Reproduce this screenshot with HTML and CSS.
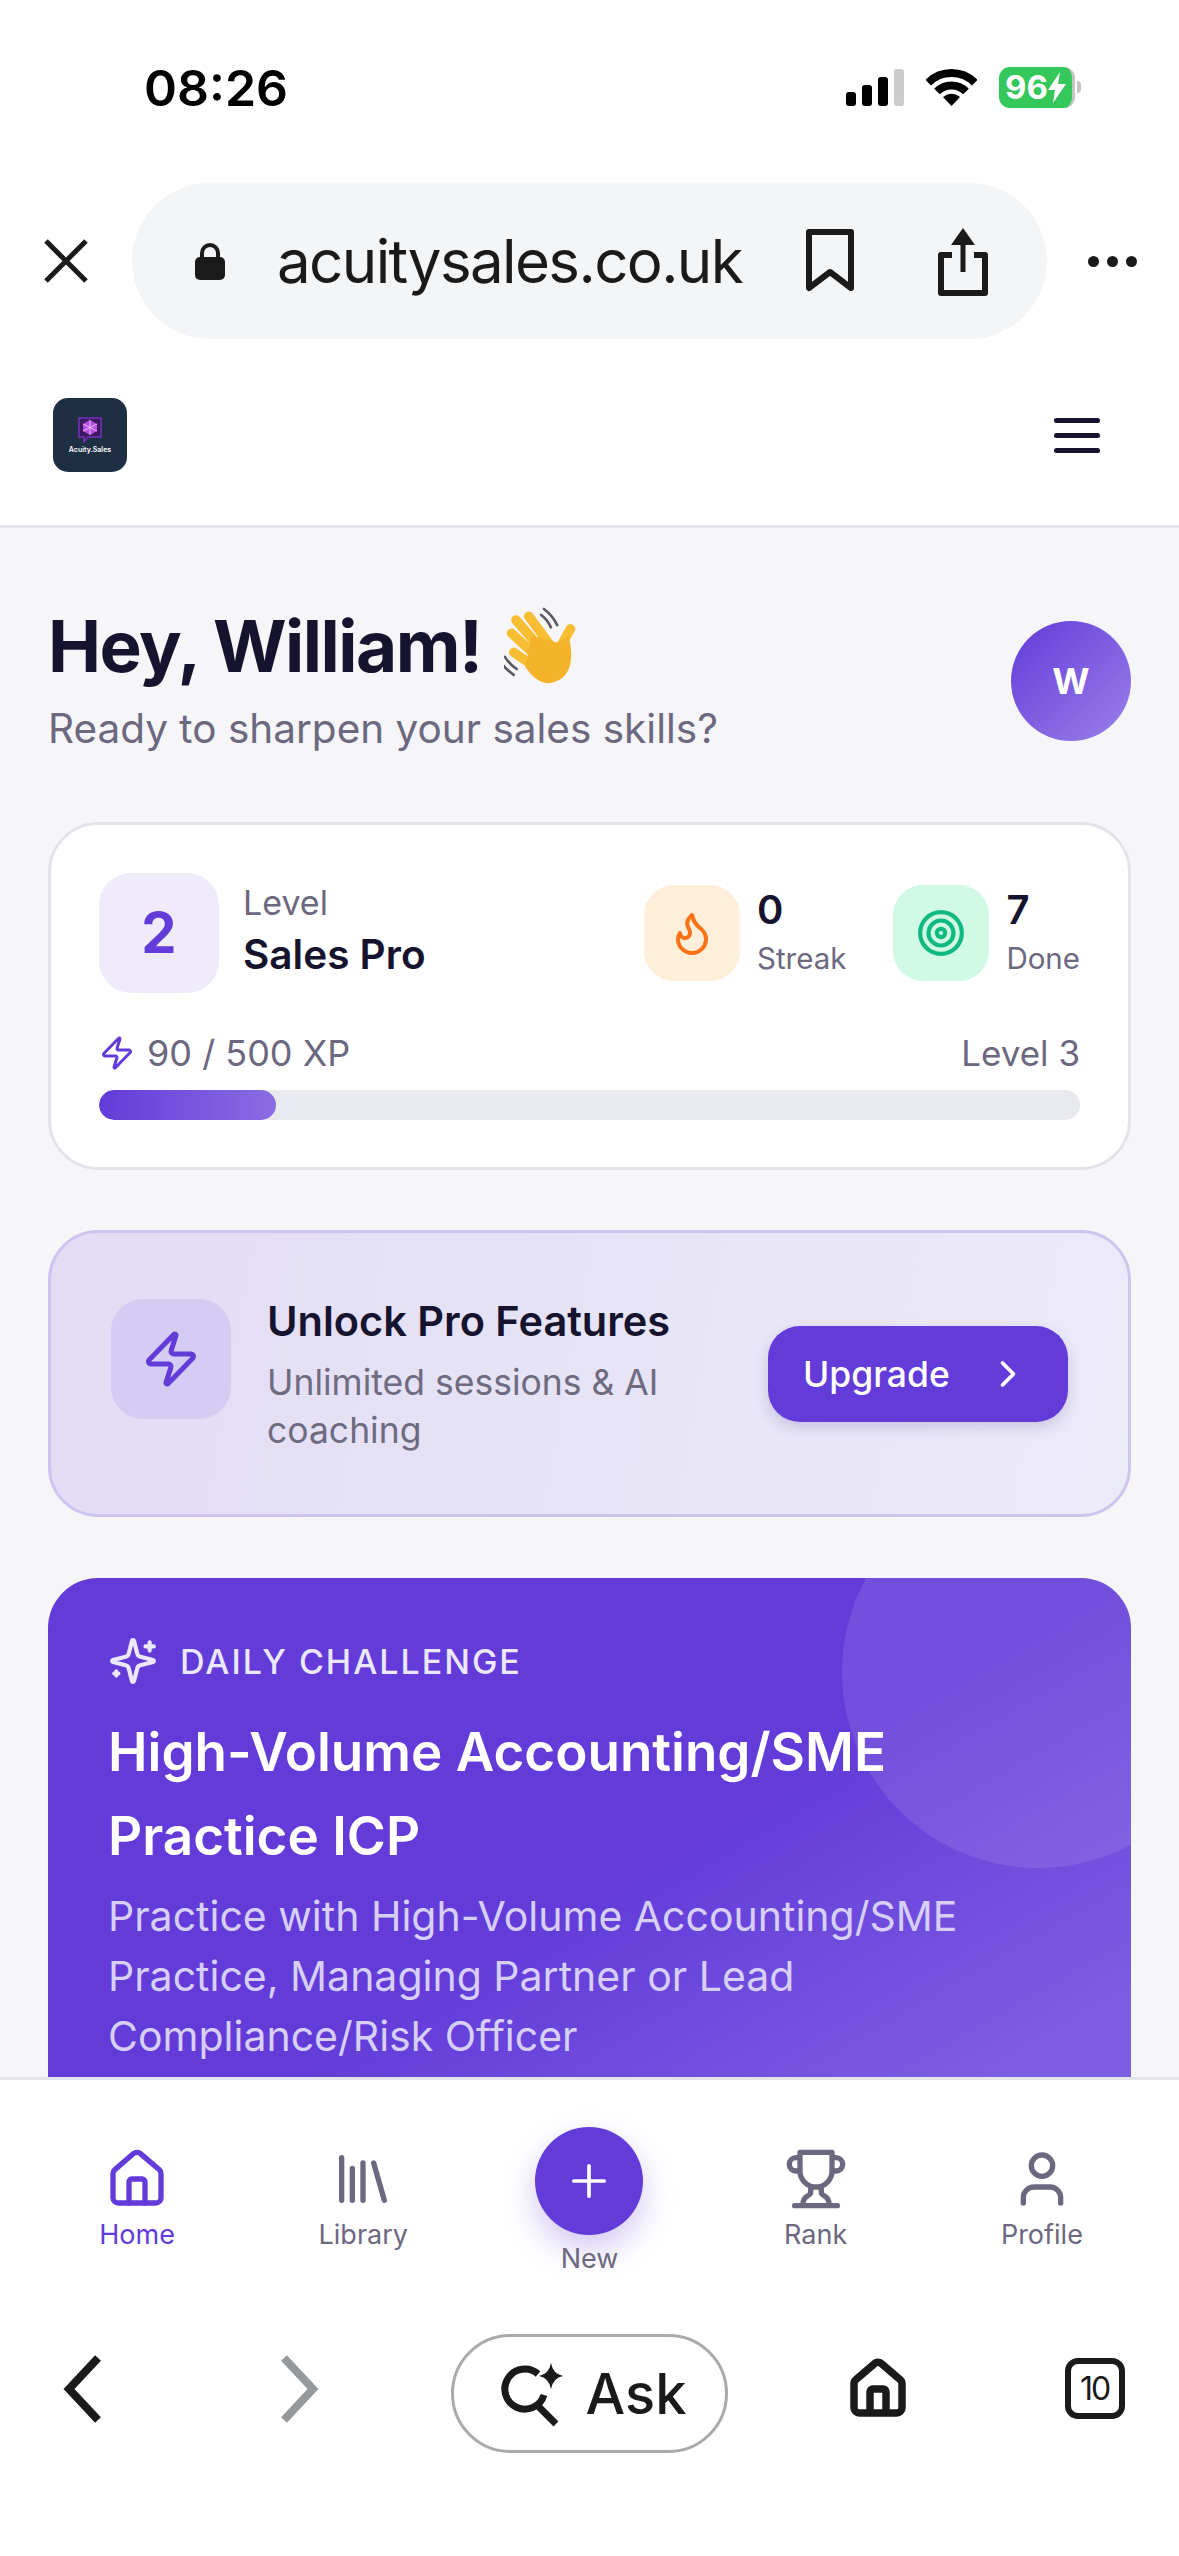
FILE: index.html
```html
<!DOCTYPE html>
<html lang="en">
<head>
    <meta charset="UTF-8">
    <title>Acuity Sales</title>
    <link rel="stylesheet" href="styles.css">
</head>
<body>
    <svg class="sprite" width="0" height="0">
        <symbol id="i-zap" viewBox="0 0 24 24"><path d="M4 14a1 1 0 0 1-.78-1.63l9.9-10.2a.5.5 0 0 1 .86.46l-1.92 6.02A1 1 0 0 0 13 10h7a1 1 0 0 1 .78 1.63l-9.9 10.2a.5.5 0 0 1-.86-.46l1.92-6.02A1 1 0 0 0 11 14z"/></symbol>
        <symbol id="i-home" viewBox="0 0 24 24"><path d="M15 21v-8a1 1 0 0 0-1-1h-4a1 1 0 0 0-1 1v8"/><path d="M3 10a2 2 0 0 1 .709-1.528l7-5.999a2 2 0 0 1 2.582 0l7 5.999A2 2 0 0 1 21 10v9a2 2 0 0 1-2 2H5a2 2 0 0 1-2-2z"/></symbol>
    </svg>

    <div class="status">
        <span class="time">08:26</span>
        <div class="status-icons">
            <svg class="signal" width="58" height="37" viewBox="0 0 58 37"><rect y="23" width="10" height="14" rx="3"/><rect x="16" y="16" width="10" height="21" rx="3"/><rect x="32" y="8" width="10" height="29" rx="3"/><rect x="48" width="10" height="37" rx="3" fill="#ccc"/></svg>
            <svg class="wifi" width="51" height="37" viewBox="0 0 51 37"><path d="M2.2 13.7a33 33 0 0 1 46.6 0M11 22.5a20.5 20.5 0 0 1 29 0" fill="none" stroke="#000" stroke-width="8"/><path d="M25.5 37 17 28q8.500-6.500 17 0z"/></svg>
            <div class="battery">
                <div class="battery-body">
                    <span>96</span>
                    <svg width="18" height="31" viewBox="0 0 18 31"><path d="M12 0 0 18h7l-2 13 13-19h-8z" fill="#fff"/></svg>
                </div>
                <span class="battery-nub"></span>
            </div>
        </div>
    </div>

    <div class="urlbar">
        <svg class="close-icon" width="46" height="46" viewBox="0 0 46 46"><path d="M3 3l40 40M43 3 3 43" stroke="#1a1a1a" stroke-width="5"/></svg>
        <div class="pill">
            <svg class="lock" width="30" height="37" viewBox="0 0 30 37"><path d="M7 16V10a8 8 0 0 1 16 0v6" fill="none" stroke="#1a1a1a" stroke-width="4"/><rect y="14" width="30" height="23" rx="5" fill="#1a1a1a"/></svg>
            <span class="url">acuitysales.co.uk</span>
            <svg class="bookmark" width="48" height="64" viewBox="0 0 48 64"><path d="M3 3h42v56L24 43 3 59z" fill="none" stroke="#1a1a1a" stroke-width="6" stroke-linejoin="round"/></svg>
            <svg class="share" width="52" height="70" viewBox="0 0 52 70"><path d="M15 29H4v38h44V29H37" fill="none" stroke="#1a1a1a" stroke-width="6" stroke-linejoin="round"/><path d="M26 46V10" stroke="#1a1a1a" stroke-width="5"/><path d="M14 19 26 2l12 17z" fill="#1a1a1a"/></svg>
        </div>
        <div class="dots"><span></span><span></span><span></span></div>
    </div>

    <header class="app-header">
        <div class="logo">
            <svg width="24" height="26" viewBox="0 0 24 26"><path d="M1 1h22v19H10l-4 5v-5H1z" fill="#3b1a5e" stroke="#7b2cbf" stroke-width="1.500"/><path d="M12 3l7 4v7l-7 4-7-4V7z" fill="#b84ee8"/><path d="M12 3v15M5 7l14 7M19 7 5 14" stroke="#f0d4ff" stroke-width=".8"/></svg>
            <span>Acuity.Sales</span>
        </div>
        <div class="burger"><span></span><span></span><span></span></div>
    </header>

    <main class="content">
        <section class="hero">
            <div class="hero-text">
                <h1>Hey, William!
                    <svg class="wave" width="74" height="81" viewBox="90 60 200 220">
                        <path d="M198 68q24 18 36 44M190 84q18 14 27 34M76 205q14 24 40 42M92 198q12 20 32 33" fill="none" stroke="#5b5b5f" stroke-width="7" stroke-linecap="round"/>
                        <g fill="none" stroke="#f7bd33" stroke-width="26" stroke-linecap="round">
                            <path d="M157 88l55 75M122 98l65 75M110 134l60 55M116 186l50 34M270 122l-28 50"/>
                        </g>
                        <path d="M165 140l70 20 30-20q12 50 4 80-12 45-62 50-35-5-60-45z" fill="#f5b32c"/>
                    </svg>
                </h1>
                <p>Ready to sharpen your sales skills?</p>
            </div>
            <div class="avatar">W</div>
        </section>

        <section class="card stats">
            <div class="stats-top">
                <div class="level-tile">2</div>
                <div class="level-text">
                    <span class="muted">Level</span>
                    <strong>Sales Pro</strong>
                </div>
                <div class="stat stat-first">
                    <div class="stat-tile tile-orange">
                        <svg width="48" height="48" viewBox="0 0 24 24" class="line flame"><path d="M8.500 14.500A2.500 2.500 0 0 0 11 12c0-1.380-.5-2-1-3-1.072-2.143-.224-4.054 2-6 .5 2.500 2 4.900 4 6.500 2 1.600 3 3.500 3 5.500a7 7 0 1 1-14 0c0-1.153.433-2.294 1-3a2.500 2.500 0 0 0 2.500 2.500z"/></svg>
                    </div>
                    <div class="stat-text"><strong>0</strong><span class="muted">Streak</span></div>
                </div>
                <div class="stat">
                    <div class="stat-tile tile-green">
                        <svg width="50" height="50" viewBox="0 0 24 24" class="line target"><circle cx="12" cy="12" r="10"/><circle cx="12" cy="12" r="6"/><circle cx="12" cy="12" r="2"/></svg>
                    </div>
                    <div class="stat-text"><strong>7</strong><span class="muted">Done</span></div>
                </div>
            </div>
            <div class="xp-row">
                <span class="xp-now">
                    <svg width="36" height="36" class="line purple"><use href="#i-zap"/></svg>
                    90 / 500 XP
                </span>
                <span>Level 3</span>
            </div>
            <div class="progress"><div class="progress-fill" style="width: 18%"></div></div>
        </section>

        <section class="card promo">
            <div class="promo-tile">
                <svg width="60" height="60" class="line purple"><use href="#i-zap"/></svg>
            </div>
            <div class="promo-text">
                <h2>Unlock Pro Features</h2>
                <p>Unlimited sessions &amp; AI coaching</p>
            </div>
            <button class="upgrade">
                Upgrade
                <svg width="44" height="44" viewBox="0 0 24 24" class="line"><path d="m9 18 6-6-6-6"/></svg>
            </button>
        </section>

        <section class="challenge">
            <div class="challenge-label">
                <svg width="50" height="50" viewBox="0 0 24 24" class="line"><path d="M9.937 15.500A2 2 0 0 0 8.500 14.063l-6.135-1.582a.5.5 0 0 1 0-.962L8.500 9.936A2 2 0 0 0 9.937 8.500l1.582-6.135a.5.5 0 0 1 .963 0L14.063 8.500A2 2 0 0 0 15.500 9.937l6.135 1.581a.5.5 0 0 1 0 .964L15.500 14.063a2 2 0 0 0-1.437 1.437l-1.582 6.135a.5.5 0 0 1-.963 0z"/><path d="M20 3v4M22 5h-4M4 17v2M5 18H3"/></svg>
                DAILY CHALLENGE
            </div>
            <h2>High-Volume Accounting/SME Practice ICP</h2>
            <p>Practice with High-Volume Accounting/SME Practice, Managing Partner or Lead Compliance/Risk Officer</p>
        </section>
    </main>

    <nav class="tabbar">
        <div class="tab tab-active">
            <svg width="64" height="64" class="line"><use href="#i-home"/></svg>
            <span>Home</span>
        </div>
        <div class="tab">
            <svg width="64" height="64" viewBox="0 0 24 24" class="line"><path d="m16 6 4 14M12 6v14M8 8v12M4 4v16"/></svg>
            <span>Library</span>
        </div>
        <div class="tab tab-new">
            <div class="new-btn">
                <svg width="52" height="52" viewBox="0 0 24 24" class="line plus"><path d="M5 12h14M12 5v14"/></svg>
            </div>
            <span>New</span>
        </div>
        <div class="tab">
            <svg width="64" height="64" viewBox="0 0 24 24" class="line"><path d="M6 9H4.500a2.500 2.500 0 0 1 0-5H6M18 9h1.500a2.500 2.500 0 0 0 0-5H18M4 22h16M10 14.660V17c0 .55-.47.98-.97 1.210C7.850 18.750 7 20.240 7 22M14 14.660V17c0 .55.47.98.97 1.210C16.150 18.750 17 20.240 17 22M18 2H6v7a6 6 0 0 0 12 0V2Z"/></svg>
            <span>Rank</span>
        </div>
        <div class="tab">
            <svg width="64" height="64" viewBox="0 0 24 24" class="line"><path d="M19 21v-2a4 4 0 0 0-4-4H9a4 4 0 0 0-4 4v2"/><circle cx="12" cy="7" r="4"/></svg>
            <span>Profile</span>
        </div>
    </nav>

    <div class="toolbar">
        <svg class="tool" width="40" height="68" viewBox="0 0 40 68"><path d="M35 3 6 34l29 31" fill="none" stroke="#1a1a1a" stroke-width="8"/></svg>
        <svg class="tool" width="40" height="68" viewBox="0 0 40 68"><path d="M5 3l29 31L5 65" fill="none" stroke="#96999c" stroke-width="8"/></svg>
        <div class="ask">
            <svg width="66" height="66" viewBox="0 0 66 66"><path d="M38 13A20 20 0 1 0 44 34M37 44l19 19" fill="none" stroke="#1a1a1a" stroke-width="7"/><path d="M51 2q2 11 12 13-10 2-12 13-2-11-12-13 10-2 12-13z" fill="#1a1a1a"/></svg>
            <span>Ask</span>
        </div>
        <svg class="tool line-dark" width="64" height="64"><use href="#i-home"/></svg>
        <div class="tool tabs-count">10</div>
    </div>
</body>
</html>
```

FILE: styles.css
```css
* {
    box-sizing: border-box;
}

body {
    margin: 0;
    width: 1179px;
    height: 2556px;
    overflow: hidden;
    display: flex;
    flex-direction: column;
    font-family: 'Inter', 'Liberation Sans', sans-serif;
    background: #ffffff;
    color: #16132e;
}

h1, h2, p {
    margin: 0;
}

.sprite {
    position: absolute;
}

.line {
    fill: none;
    stroke: currentColor;
    stroke-width: 2;
    stroke-linecap: round;
    stroke-linejoin: round;
}

.purple {
    color: #623bd9;
}

.flame {
    color: #f97316;
}

.target {
    color: #10b981;
}

.plus {
    stroke-width: 1.700;
}

.muted {
    color: #6b6880;
}

/* phone status bar */
.status {
    height: 183px;
    flex: none;
    padding: 0 98px 9px 144px;
    display: flex;
    justify-content: space-between;
    align-items: center;
    color: #000000;
}

.time {
    margin-top: 2px;
    font-size: 50px;
    font-weight: 600;
}

.status-icons {
    display: flex;
    align-items: center;
}

.wifi {
    margin-left: 22px;
}

.battery {
    display: flex;
    align-items: center;
    margin-left: 22px;
}

.battery-body {
    width: 76px;
    height: 41px;
    border-radius: 11px;
    background: #34c759;
    border-right: 3px solid #c4c4c4;
    color: #ffffff;
    font-size: 33px;
    font-weight: 700;
    display: flex;
    align-items: center;
    justify-content: center;
}

.battery-nub {
    width: 4px;
    height: 12px;
    margin-left: 2px;
    border-radius: 0 4px 4px 0;
    background: #c4c4c4;
}

/* browser url bar */
.urlbar {
    height: 156px;
    flex: none;
    display: flex;
    align-items: center;
    padding-left: 43px;
}

.pill {
    width: 915px;
    height: 156px;
    margin-left: 43px;
    border-radius: 78px;
    background: #f4f5f7;
    display: flex;
    align-items: center;
    padding-left: 63px;
}

.url {
    margin-left: 52px;
    width: 529px;
    font-size: 60px;
    letter-spacing: -1.600px;
    color: #1a1a1a;
    white-space: nowrap;
}

.share {
    margin-left: 83px;
}

.dots {
    display: flex;
    gap: 8px;
    margin-left: 41px;
}

.dots span {
    width: 11px;
    height: 11px;
    border-radius: 50%;
    background: #1a1a1a;
}

/* app header */
.app-header {
    height: 189px;
    flex: none;
    padding: 6px 79px 0 53px;
    display: flex;
    justify-content: space-between;
    align-items: center;
    border-bottom: 3px solid #e3e4ea;
}

.logo {
    width: 74px;
    height: 74px;
    border-radius: 15px;
    background: #1e2f44;
    display: flex;
    flex-direction: column;
    align-items: center;
    justify-content: center;
    gap: 2px;
    color: #ffffff;
    font-size: 7px;
    font-weight: 600;
}

.burger {
    display: flex;
    flex-direction: column;
    gap: 10px;
}

.burger span {
    width: 46px;
    height: 5px;
    border-radius: 3px;
    background: #16132e;
}

/* main content */
.content {
    flex: 1;
    min-height: 0;
    overflow: hidden;
    background: #f6f6f9;
    padding: 0 48px;
}

.hero {
    height: 294px;
    padding-top: 93px;
    display: flex;
    justify-content: space-between;
    align-items: flex-start;
}

.hero-text {
    margin-top: -23px;
}

.hero h1 {
    font-size: 71px;
    line-height: 96px;
    font-weight: 700;
    letter-spacing: -1.500px;
    display: flex;
    align-items: center;
    gap: 22px;
}

.hero p {
    margin-top: 5px;
    font-size: 40.500px;
    line-height: 60px;
    color: #6b6880;
}

.avatar {
    width: 120px;
    height: 120px;
    border-radius: 50%;
    background: linear-gradient(135deg, #623bd9, #9a80e8);
    color: #ffffff;
    font-size: 36px;
    font-weight: 700;
    display: flex;
    align-items: center;
    justify-content: center;
}

.card {
    border-radius: 50px;
    border: 3px solid #e3e4ea;
    background: #ffffff;
}

.stats {
    height: 348px;
    padding: 48px 48px 0;
}

.stats-top {
    display: flex;
    align-items: center;
}

.level-tile {
    width: 120px;
    height: 120px;
    border-radius: 32px;
    background: #efebfb;
    color: #623bd9;
    font-size: 56px;
    font-weight: 700;
    display: flex;
    align-items: center;
    justify-content: center;
}

.level-text {
    margin: -6px 0 0 24px;
    display: flex;
    flex-direction: column;
    font-size: 34px;
    line-height: 50px;
}

.level-text span {
    margin-top: -2px;
}

.level-text strong {
    margin-top: 2px;
    font-size: 40.500px;
    font-weight: 600;
}

.stat {
    display: flex;
    align-items: center;
    margin-left: 47px;
}

.stat-first {
    margin-left: auto;
}

.stat-tile {
    width: 96px;
    height: 96px;
    border-radius: 30px;
    display: flex;
    align-items: center;
    justify-content: center;
}

.tile-orange {
    background: #ffeed9;
}

.tile-green {
    background: #d0fae5;
}

.stat-text {
    margin-left: 17px;
    display: flex;
    flex-direction: column;
    font-size: 29.500px;
    line-height: 47px;
}

.stat-text strong {
    font-size: 40px;
    font-weight: 600;
    line-height: 50px;
}

.xp-row {
    margin-top: 38px;
    display: flex;
    justify-content: space-between;
    align-items: center;
    font-size: 35px;
    color: #6b6880;
}

.xp-now {
    display: flex;
    align-items: center;
    gap: 12px;
    font-size: 36px;
}

.progress {
    margin-top: 15px;
    height: 30px;
    border-radius: 15px;
    background: #e9eaef;
    overflow: hidden;
}

.progress-fill {
    height: 100%;
    border-radius: 15px;
    background: linear-gradient(90deg, #623bd9, #8a6de3);
}

.promo {
    height: 287px;
    margin-top: 60px;
    padding: 66px 60px 0;
    border-color: #cfc4f0;
    background: linear-gradient(100deg, #e2dcf5, #ecebf8);
    display: flex;
    align-items: flex-start;
}

.promo-tile {
    width: 120px;
    height: 120px;
    flex: none;
    border-radius: 32px;
    background: #d5ccf3;
    display: flex;
    align-items: center;
    justify-content: center;
}

.promo-text {
    margin: -4px 0 0 36px;
    width: 440px;
}

.promo-text h2 {
    font-size: 41.500px;
    line-height: 52px;
    font-weight: 600;
}

.promo-text p {
    margin-top: 12px;
    font-size: 35.500px;
    line-height: 48px;
    color: #6e6b80;
}

.upgrade {
    margin: 27px 0 0 auto;
    width: 300px;
    height: 96px;
    flex: none;
    border: none;
    border-radius: 32px;
    background: #623bd9;
    box-shadow: 0 6px 14px rgba(60, 40, 140, 0.18);
    color: #ffffff;
    font-family: inherit;
    font-size: 35.500px;
    font-weight: 500;
    display: flex;
    align-items: center;
    justify-content: space-between;
    padding: 0 38px 0 35px;
}

.challenge {
    position: relative;
    overflow: hidden;
    margin-top: 61px;
    padding: 58px 60px 120px;
    border-radius: 50px 50px 0 0;
    background: linear-gradient(150deg, #623bd9 50%, #7d5de2 85%);
    color: #ffffff;
}

/* decorative circle, top right of the card */
.challenge::before {
    content: "";
    position: absolute;
    top: -102px;
    right: -103px;
    width: 392px;
    height: 392px;
    border-radius: 50%;
    background: rgba(255, 255, 255, 0.1);
}

.challenge > * {
    position: relative;
}

.challenge-label {
    display: flex;
    align-items: center;
    gap: 22px;
    font-size: 34px;
    font-weight: 500;
    letter-spacing: 2px;
    color: #ece8fb;
}

.challenge h2 {
    margin-top: 24px;
    font-size: 53px;
    line-height: 84px;
    font-weight: 600;
}

.challenge p {
    margin-top: 8px;
    font-size: 41px;
    line-height: 60px;
    color: #d7cff6;
}

/* app tab bar */
.tabbar {
    height: 243px;
    flex: none;
    border-top: 3px solid #e3e4ea;
    padding: 47px 24px 0;
    background: #ffffff;
    display: grid;
    grid-template-columns: repeat(5, 1fr);
    align-items: start;
}

.tab {
    padding-top: 20px;
    display: flex;
    flex-direction: column;
    align-items: center;
    gap: 7px;
    font-size: 27px;
    line-height: 34px;
    color: #6b6880;
}

.tab-active {
    color: #623bd9;
}

.tab-new {
    padding-top: 0;
    gap: 7px;
}

.new-btn {
    width: 108px;
    height: 108px;
    border-radius: 50%;
    background: #623bd9;
    box-shadow: 0 14px 32px rgba(98, 59, 217, 0.28);
    color: #ffffff;
    display: flex;
    align-items: center;
    justify-content: center;
}

/* browser toolbar */
.toolbar {
    height: 236px;
    flex: none;
    padding-top: 14px;
    display: grid;
    grid-template-columns: 166px 266px 314px 264px 169px;
    grid-template-rows: 119px;
    align-items: center;
    justify-items: center;
    background: #ffffff;
}

.tool {
    margin-bottom: 10px;
}

.line-dark {
    fill: none;
    stroke: #1a1a1a;
    stroke-width: 2.800;
    stroke-linejoin: round;
}

.ask {
    width: 277px;
    height: 119px;
    border: 3px solid #aaaaaa;
    border-radius: 60px;
    padding-left: 8px;
    display: flex;
    align-items: center;
    justify-content: center;
    gap: 20px;
    font-size: 56px;
    font-weight: 500;
    color: #1a1a1a;
}

.tabs-count {
    width: 60px;
    height: 61px;
    border: 6px solid #1a1a1a;
    border-radius: 13px;
    display: flex;
    align-items: center;
    justify-content: center;
    font-size: 32px;
    letter-spacing: -2px;
    color: #1a1a1a;
}
```
